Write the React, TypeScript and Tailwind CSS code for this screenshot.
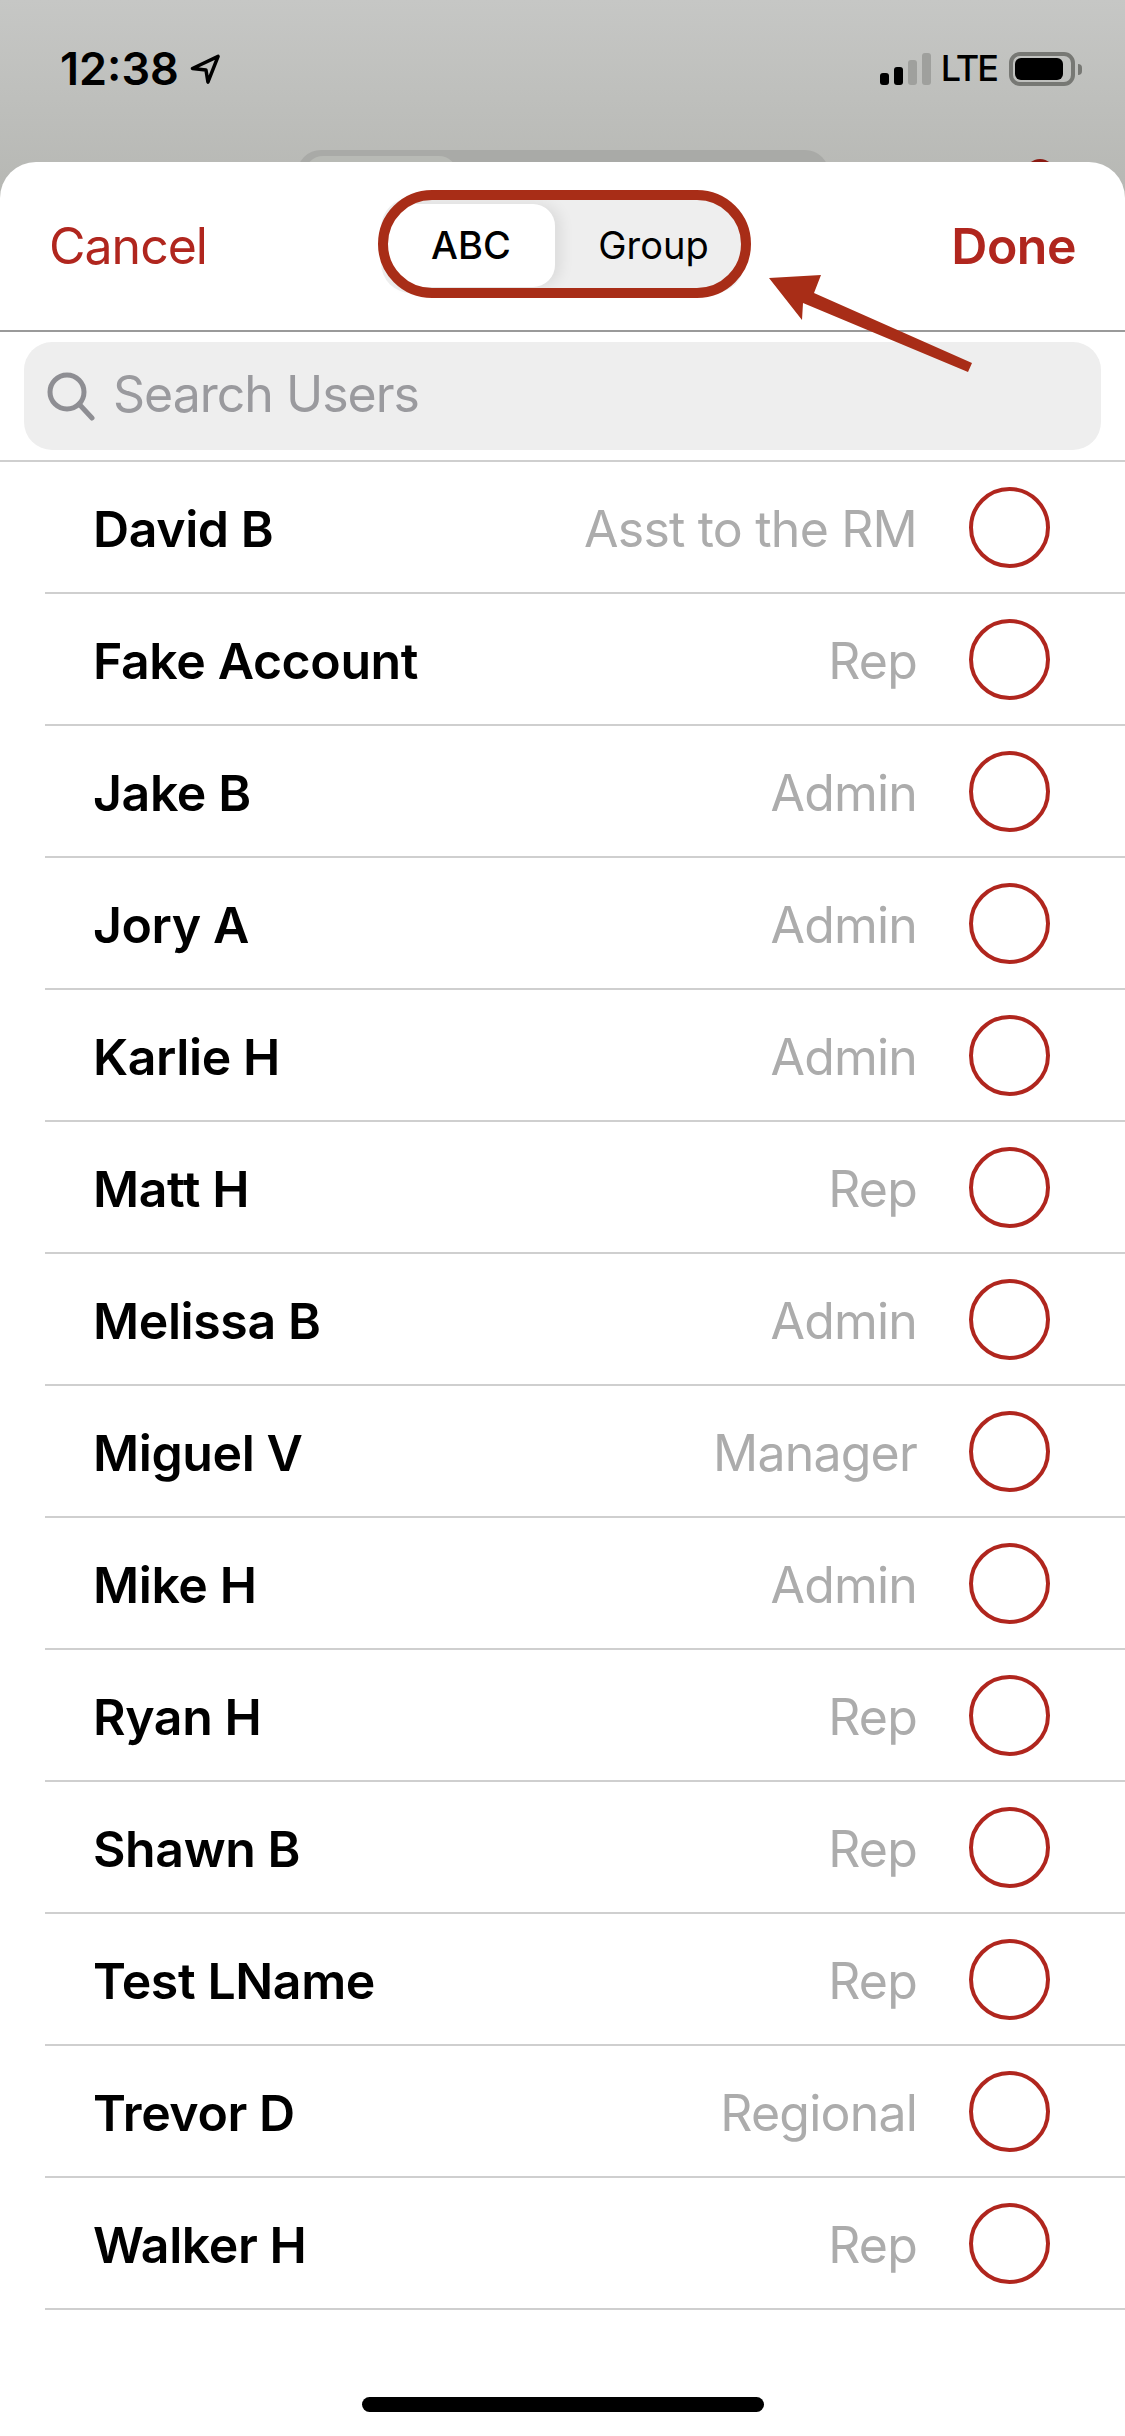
import React from "react";

const users: [string, string][] = [
  ["David B", "Asst to the RM"],
  ["Fake Account", "Rep"],
  ["Jake B", "Admin"],
  ["Jory A", "Admin"],
  ["Karlie H", "Admin"],
  ["Matt H", "Rep"],
  ["Melissa B", "Admin"],
  ["Miguel V", "Manager"],
  ["Mike H", "Admin"],
  ["Ryan H", "Rep"],
  ["Shawn B", "Rep"],
  ["Test LName", "Rep"],
  ["Trevor D", "Regional"],
  ["Walker H", "Rep"],
];

function StatusBar() {
  return (
    <div className="flex h-[150px] items-start justify-between pl-[60px] pr-[43px] pt-[52px]">
      <div className="flex items-center gap-[11px]">
        <span className="text-[45px] font-semibold leading-[33px] text-black">12:38</span>
        <svg width="31" height="32" viewBox="0 0 32 32" fill="none" stroke="#000" strokeWidth="3.6" strokeLinejoin="round">
          <path d="M2.5 15.5 L29 3 L18.5 29.5 L16.5 17 Z" />
        </svg>
      </div>
      <div className="flex items-start">
        <div className="flex h-[33px] items-end gap-[5px]">
          <div className="h-[12px] w-[9px] rounded-[3px] bg-black" />
          <div className="h-[18px] w-[9px] rounded-[3px] bg-black" />
          <div className="h-[25px] w-[9px] rounded-[3px] bg-[#9fa09d]" />
          <div className="h-[32px] w-[9px] rounded-[3px] bg-[#9fa09d]" />
        </div>
        <span className="ml-[10px] text-[36px] font-medium leading-[33px] tracking-[-2px] text-black">LTE</span>
        <div className="ml-[12px] flex h-[34px] w-[66px] items-center rounded-[11px] border-[4px] border-[#777874] p-[2px]">
          <div className="h-[22px] w-[48px] rounded-[6px] bg-black" />
        </div>
        <div className="ml-[3px] mt-[12px] h-[11px] w-[4px] rounded-r-[4px] bg-[#777874]" />
      </div>
    </div>
  );
}

function BackdropPeek() {
  return (
    <div className="relative h-[48px] pl-[297px]">
      <div className="h-[48px] w-[532px] overflow-hidden rounded-t-[24px] bg-[#a9aaa7] pl-[8px] pt-[6px]">
        <div className="h-[42px] w-[152px] rounded-t-[18px] bg-[#b8bab5]" />
      </div>
      <div className="absolute left-[1026px] top-[9px] h-[30px] w-[28px] rounded-t-full bg-[#8b1a12]" />
    </div>
  );
}

function Header() {
  return (
    <div className="relative flex h-[170px] items-center justify-between border-b-2 border-[#9a9a9a] pl-[49px] pr-[49px]">
      <span className="text-[50px] tracking-[-1px] text-[#b0261e]">Cancel</span>
      <div className="absolute left-[381px] top-[36px] flex h-[95px] w-[363px] rounded-[30px] bg-[#eeeeee] pl-[6px] pt-[6px]">
        <div className="flex h-[83px] w-[168px] items-center justify-center rounded-[22px] bg-white shadow-[6px_0_14px_rgba(0,0,0,0.08)]">
          <span className="text-[38px] font-medium text-black">ABC</span>
        </div>
        <div className="flex h-[83px] flex-1 items-center justify-center pl-[8px]">
          <span className="text-[38px] text-black">Group</span>
        </div>
      </div>
      <span className="text-[50px] font-semibold tracking-[-0.5px] text-[#b0261e]">Done</span>
    </div>
  );
}

function SearchBar() {
  return (
    <div className="border-b-2 border-[#cfcfcf] px-[24px] pb-[10px] pt-[10px]">
      <div className="flex h-[108px] items-center rounded-[28px] bg-[#eeeeee] pl-[22px]">
        <svg width="50" height="50" viewBox="0 0 50 50" fill="none" stroke="#8e8e93" strokeWidth="5" strokeLinecap="round">
          <circle cx="21" cy="21" r="17" />
          <path d="M33 33 L46 47" />
        </svg>
        <span className="ml-[17px] pb-[3px] text-[50px] tracking-[-1px] text-[#9a9a9e]">Search Users</span>
      </div>
    </div>
  );
}

function Row({ name, role }: { name: string; role: string }) {
  return (
    <div className="ml-[45px] flex h-[132px] items-center border-b-2 border-[#cfcfcf] pl-[48px] pr-[75px]">
      <span className="flex-1 pt-[5px] text-[50px] font-semibold tracking-[-0.4px] text-black">{name}</span>
      <span className="pt-[5px] text-[50px] tracking-[-0.8px] text-[#acacac]">{role}</span>
      <div className="ml-[52px] h-[81px] w-[81px] rounded-full border-[4px] border-[#b0261e]" />
    </div>
  );
}

export default function App() {
  return (
    <div
      className="relative h-[2436px] w-[1125px] overflow-hidden bg-white"
      style={{ fontFamily: "Inter, 'Liberation Sans', sans-serif" }}
    >
      <div className="h-[198px] bg-gradient-to-b from-[#c6c7c5] to-[#b6b7b3]">
        <StatusBar />
        <BackdropPeek />
      </div>
      <div className="relative -mt-[36px] h-[2274px] rounded-t-[36px] bg-white">
        <Header />
        <SearchBar />
        {users.map(([n, r]) => (
          <Row key={n} name={n} role={r} />
        ))}
        <div className="absolute bottom-[24px] left-[362px] h-[15px] w-[402px] rounded-full bg-black" />
      </div>
      <div className="absolute left-[378px] top-[190px] h-[108px] w-[373px] rounded-[54px] border-[10px] border-[#a82d17]" />
      <svg className="absolute left-[760px] top-[270px]" width="220" height="110" viewBox="760 270 220 110">
        <polygon points="769,278 821,275 814,293 972,363 968,372 803,303 802,320" fill="#a82d17" />
      </svg>
    </div>
  );
}
